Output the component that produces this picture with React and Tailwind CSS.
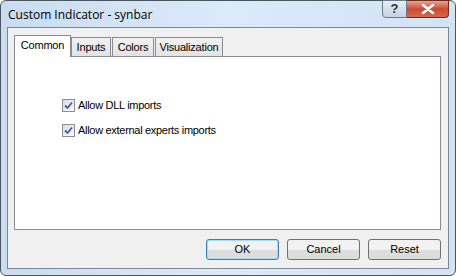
const tabs = [
  { name: 'Common', w: 'w-[57px]', active: true },
  { name: 'Inputs', w: 'w-[40px]' },
  { name: 'Colors', w: 'w-[42px]' },
  { name: 'Visualization', w: 'w-[68px]' },
];

const CheckRow = ({ label }) => (
  <label className="flex items-center h-[13px] gap-[3px] text-[11px] leading-[13px] tracking-[-0.3px] text-black">
    <span className="w-[13px] h-[13px] border border-[#8f8f8f] bg-gradient-to-br from-[#dcdcdc] to-[#fafafa] flex items-center justify-center">
      <svg width="9" height="9" viewBox="0 0 9 9">
        <path d="M1 4.5 L3.5 7 L8 1.5" fill="none" stroke="#3b5ea8" strokeWidth="1.8" />
      </svg>
    </span>
    <span>{label}</span>
  </label>
);

const DlgButton = ({ children, focused }) => (
  <button
    className={`w-[73px] h-[21px] rounded-[3px] border text-[11px] text-black bg-gradient-to-b from-[#f2f2f2] from-50% to-[#dddddd] to-50% ${
      focused ? 'border-[#3c7fb1] shadow-[inset_0_0_0_1px_#a6dcf7]' : 'border-[#707070]'
    }`}
  >
    {children}
  </button>
);

export default function App() {
  return (
    <div
      className="w-[456px] h-[276px] rounded-[6px] border border-[#4a5561] bg-gradient-to-r from-[#c9dcf0] via-[#dbeaf9] to-[#d2e3f5] flex flex-col"
      style={{ fontFamily: '"Liberation Sans", Arial, sans-serif' }}
    >
      {/* Title bar */}
      <div className="h-[26px] flex items-start justify-between">
        <span className="pl-[7px] pt-[5px] text-[12px] text-black" style={{ fontFamily: '"Open Sans", "Liberation Sans", sans-serif' }}>
          Custom Indicator - synbar
        </span>
        <div className="flex mr-[6px] -mt-px">
          <div className="w-[25px] h-[18px] rounded-bl-[4px] border border-[#6b7a8a] bg-gradient-to-b from-[#e7eef6] to-[#c4d2e1] flex items-center justify-center text-[13px] text-[#333] font-bold">
            ?
          </div>
          <div className="w-[42px] h-[18px] rounded-br-[4px] border border-l-0 border-[#6e2b20] bg-gradient-to-b from-[#e6a592] via-[#cc4a31] to-[#d36a4d] flex items-center justify-center">
            <svg width="14" height="10" viewBox="0 0 14 10">
              <path d="M2 1 L12 9 M12 1 L2 9" stroke="#ffffff" strokeWidth="2.6" strokeLinecap="round" />
            </svg>
          </div>
        </div>
      </div>

      {/* Client area */}
      <div className="flex-1 mx-[6px] mb-[6px] border border-[#7a8794] bg-[#f0f0f0] flex flex-col pl-[6px] pr-[7px] pt-[7px] pb-[8px]">
        <div className="flex items-end h-[21px] relative z-10 tracking-[-0.2px]">
          {tabs.map((t) =>
            t.active ? (
              <div
                key={t.name}
                className={`${t.w} h-[22px] -mb-px bg-white border border-b-0 border-[#898c95] text-[11px] text-black flex items-center justify-center pb-[3px]`}
              >
                {t.name}
              </div>
            ) : (
              <div
                key={t.name}
                className={`${t.w} h-[19px] mr-[1px] bg-gradient-to-b from-[#f2f2f2] to-[#e3e3e3] border border-b-0 border-[#898c95] text-[11px] text-black flex items-center justify-center`}
              >
                {t.name}
              </div>
            )
          )}
        </div>
        <div className="h-[174px] bg-white border border-[#898c95] flex flex-col gap-[12px] pt-[42px] pl-[47px]">
          <CheckRow label="Allow DLL imports" />
          <CheckRow label="Allow external experts imports" />
        </div>
        <div className="flex justify-end gap-[8px] mt-[9px]">
          <DlgButton focused>OK</DlgButton>
          <DlgButton>Cancel</DlgButton>
          <DlgButton>Reset</DlgButton>
        </div>
      </div>
    </div>
  );
}
